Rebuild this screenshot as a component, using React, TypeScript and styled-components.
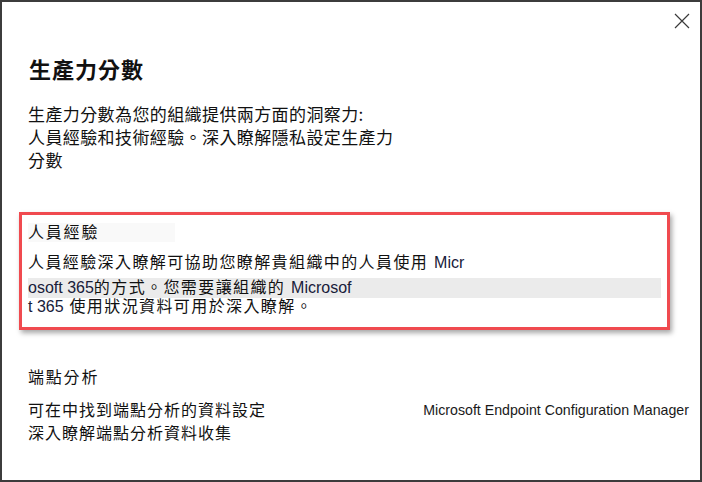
import styled, { createGlobalStyle } from "styled-components";

const GlobalStyle = createGlobalStyle`
  html, body {
    margin: 0;
    padding: 0;
    background: #ffffff;
  }
  body {
    font-family: "Noto Sans CJK TC", "Noto Sans", sans-serif;
    color: #111111;
  }
`;

const Dialog = styled.div`
  position: relative;
  width: 702px;
  height: 482px;
  box-sizing: border-box;
  border: 2px solid #3c3c3c;
  background: #ffffff;
  padding: 51px 11px 0 26px;
`;

const CloseButton = styled.button`
  position: absolute;
  top: 11px;
  right: 10px;
  width: 16px;
  height: 16px;
  padding: 0;
  border: none;
  background: transparent;
  display: flex;
  align-items: center;
  justify-content: center;
  cursor: pointer;
`;

const Title = styled.h1`
  margin: 0 0 0 1px;
  font-size: 22px;
  line-height: 30px;
  font-weight: 700;
  letter-spacing: 1px;
  color: #111111;
`;

const Intro = styled.p`
  margin: 19px 0 0;
  font-size: 17px;
  line-height: 23px;
  letter-spacing: 0.4px;
`;

const Line = styled.span`
  display: block;
`;

const Callout = styled.section`
  margin: 41px 19px 0 -9px;
  box-sizing: border-box;
  height: 118px;
  border: 3px solid #f04a4f;
  box-shadow: 2px 3px 5px rgba(0, 0, 0, 0.35);
  padding: 8px 6px 0 6px;
  font-family: "Liberation Sans", "Noto Sans CJK TC", sans-serif;
`;

const SectionHeading = styled.h2<{ $shade?: boolean }>`
  margin: 0;
  width: ${(p) => (p.$shade ? "147px" : "auto")};
  height: 19px;
  font-size: 16px;
  line-height: 19px;
  font-weight: 400;
  letter-spacing: 1.8px;
  background: ${(p) => (p.$shade ? "#f9f9f9" : "transparent")};
  font-family: "Liberation Sans", "Noto Sans CJK TC", sans-serif;
`;

const CalloutLine = styled.div<{ $shade?: boolean; $gap: number; $h: number }>`
  margin-top: ${(p) => p.$gap}px;
  height: ${(p) => p.$h}px;
  font-size: 16px;
  line-height: ${(p) => p.$h}px;
  letter-spacing: 1.4px;
  white-space: nowrap;
  background: ${(p) => (p.$shade ? "#ebebeb" : "transparent")};
`;

const Latin = styled.span`
  color: #18203a;
  letter-spacing: 0;
`;

const Endpoint = styled.section`
  margin-top: 38px;
`;

const EndpointRow = styled.div`
  margin-top: 12px;
  display: flex;
  justify-content: space-between;
  align-items: flex-start;
  font-family: "Liberation Sans", "Noto Sans CJK TC", sans-serif;
`;

const EndpointText = styled.div`
  font-size: 16px;
  line-height: 23px;
  letter-spacing: 1px;
`;

const ProductName = styled.div`
  font-size: 14.2px;
  line-height: 23px;
  color: #1a1a1a;
`;

export default function App() {
  return (
    <>
      <GlobalStyle />
      <Dialog>
        <CloseButton aria-label="關閉">
          <svg width="16" height="16" viewBox="0 0 16 16">
            <path
              d="M1 1 L15 15 M15 1 L1 15"
              stroke="#3a3a3a"
              strokeWidth="1.2"
              fill="none"
            />
          </svg>
        </CloseButton>

        <Title>生產力分數</Title>

        <Intro>
          <Line>生產力分數為您的組織提供兩方面的洞察力:</Line>
          <Line>人員經驗和技術經驗。深入瞭解隱私設定生產力</Line>
          <Line>分數</Line>
        </Intro>

        <Callout>
          <SectionHeading $shade>人員經驗</SectionHeading>
          <CalloutLine $gap={11} $h={20}>
            人員經驗深入瞭解可協助您瞭解貴組織中的人員使用 <Latin>Micr</Latin>
          </CalloutLine>
          <CalloutLine $gap={5} $h={20} $shade>
            <Latin>osoft 365</Latin>的方式。您需要讓組織的 <Latin>Microsof</Latin>
          </CalloutLine>
          <CalloutLine $gap={0} $h={18}>
            <Latin>t 365</Latin> 使用狀況資料可用於深入瞭解。
          </CalloutLine>
        </Callout>

        <Endpoint>
          <SectionHeading>端點分析</SectionHeading>
          <EndpointRow>
            <EndpointText>
              <Line>可在中找到端點分析的資料設定</Line>
              <Line>深入瞭解端點分析資料收集</Line>
            </EndpointText>
            <ProductName>Microsoft Endpoint Configuration Manager</ProductName>
          </EndpointRow>
        </Endpoint>
      </Dialog>
    </>
  );
}
